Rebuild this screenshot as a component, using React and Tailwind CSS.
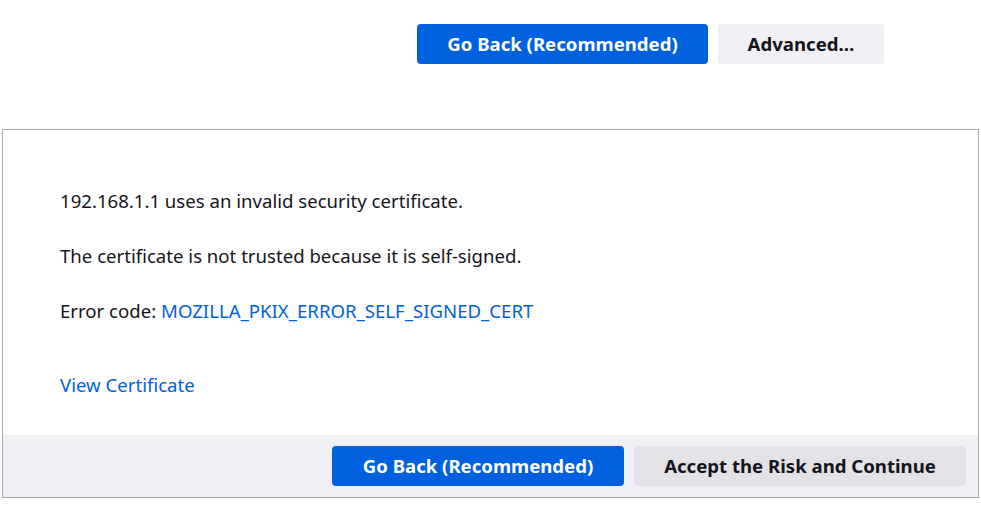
import React from 'react';

const font = { fontFamily: "'Noto Sans', 'Open Sans', sans-serif" };

const App = () => {
    return (
        <div className="w-[981px] h-[512px] bg-white text-[#15141a] overflow-hidden" style={font}>
            <div className="flex justify-end gap-[10px] pt-[24px] pr-[97px]">
                <button className="w-[291px] h-[40px] rounded-[4px] bg-[#0061e0] text-white font-bold text-[18.6px]">
                    Go Back (Recommended)
                </button>
                <button className="w-[166px] h-[40px] rounded-[4px] bg-[#f0f0f4] text-[#15141a] font-bold text-[18.6px]">
                    Advanced…
                </button>
            </div>

            <div className="ml-[2px] mt-[65px] w-[977px] h-[369px] border border-[#a9a9b0] flex flex-col">
                <div className="flex-1 pl-[57px] pt-[58px] text-[18.6px] leading-[26px]">
                    <p>192.168.1.1 uses an invalid security certificate.</p>
                    <p className="mt-[29px]">The certificate is not trusted because it is self-signed.</p>
                    <p className="mt-[29px]">
                        Error code: <a className="text-[#0061e0]">MOZILLA_PKIX_ERROR_SELF_SIGNED_CERT</a>
                    </p>
                    <p className="mt-[48px]">
                        <a className="text-[#0061e0]">View Certificate</a>
                    </p>
                </div>
                <div className="h-[62px] bg-[#f0f0f4] flex justify-end items-center gap-[10px] pr-[12px]">
                    <button className="w-[292px] h-[40px] rounded-[4px] bg-[#0061e0] text-white font-bold text-[18.6px]">
                        Go Back (Recommended)
                    </button>
                    <button className="w-[332px] h-[40px] rounded-[4px] bg-[#e2e2e7] text-[#15141a] font-bold text-[18.6px]">
                        Accept the Risk and Continue
                    </button>
                </div>
            </div>
        </div>
    );
};

export default App;
